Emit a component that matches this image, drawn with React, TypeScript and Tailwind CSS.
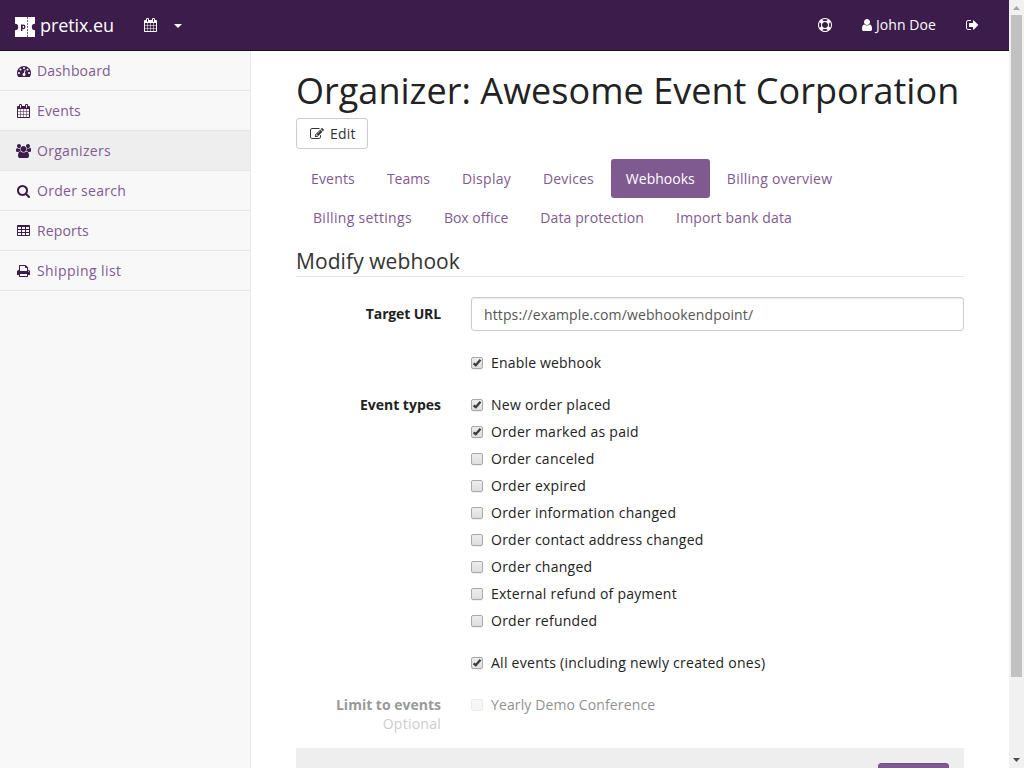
import React from "react";

type IconName =
  | "dashboard" | "calendar" | "users" | "search" | "table" | "print"
  | "user" | "signout" | "edit" | "ring";

const glyphs: Record<IconName, { x: number; w: number; d: string }> = {
  dashboard: { x: 0, w: 14, d: "M384 1152q0-53-37.5-90.5t-90.5-37.5-90.5 37.5-37.5 90.5 37.5 90.5 90.5 37.5 90.5-37.5 37.5-90.5zm192-448q0-53-37.5-90.5t-90.5-37.5-90.5 37.5-37.5 90.5 37.5 90.5 90.5 37.5 90.5-37.5 37.5-90.5zm428 481l101-382q6-26-7.5-48.5t-38.5-29.5-48 6.5-30 39.5l-101 382q-60 5-107 43.5t-63 98.5q-20 77 20 146t117 89 146-20 89-117q16-60-6-117t-72-91zm660-33q0-53-37.5-90.5t-90.5-37.5-90.5 37.5-37.5 90.5 37.5 90.5 90.5 37.5 90.5-37.5 37.5-90.5zm-640-640q0-53-37.5-90.5t-90.5-37.5-90.5 37.5-37.5 90.5 37.5 90.5 90.5 37.5 90.5-37.5 37.5-90.5zm448 192q0-53-37.5-90.5t-90.5-37.5-90.5 37.5-37.5 90.5 37.5 90.5 90.5 37.5 90.5-37.5 37.5-90.5zm320 448q0 261-141 483-19 29-54 29h-1402q-35 0-54-29-141-221-141-483 0-182 71-348t191-286 286-191 348-71 348 71 286 191 191 286 71 348z" },
  calendar: { x: 64, w: 13, d: "M192 1664h288v-288h-288v288zm352 0h320v-288h-320v288zm-352-352h288v-320h-288v320zm352 0h320v-320h-320v320zm-352-384h288v-288h-288v288zm736 736h320v-288h-320v288zm-384-736h320v-288h-320v288zm768 736h288v-288h-288v288zm-384-352h320v-320h-320v320zm-352-864v-288q0-13-9.5-22.5t-22.5-9.5h-64q-13 0-22.5 9.5t-9.5 22.5v288q0 13 9.5 22.5t22.5 9.5h64q13 0 22.5-9.5t9.5-22.5zm736 864h288v-320h-288v320zm-384-384h320v-288h-320v288zm384 0h288v-288h-288v288zm32-480v-288q0-13-9.5-22.5t-22.5-9.5h-64q-13 0-22.5 9.5t-9.5 22.5v288q0 13 9.5 22.5t22.5 9.5h64q13 0 22.5-9.5t9.5-22.5zm384-64v1280q0 52-38 90t-90 38h-1408q-52 0-90-38t-38-90v-1280q0-52 38-90t90-38h128v-96q0-66 47-113t113-47h64q66 0 113 47t47 113v96h384v-96q0-66 47-113t113-47h64q66 0 113 47t47 113v96h128q52 0 90 38t38 90z" },
  users: { x: 64, w: 15, d: "M657 896q-162 5-265 128h-134q-82 0-138-40.5t-56-118.5q0-353 124-353 6 0 43.5 21t97.5 42.5 119 21.5q67 0 133-23-5 37-5 66 0 159 93 286zm1071 637q0 120-73 189.5t-194 69.5h-874q-121 0-194-69.5t-73-189.5q0-53 3.5-103.5t14-109 26.5-108.5 43-97.5 62-81 85.5-53.5 111.5-20q10 0 43 21.5t73 48 107 48 135 21.5 135-21.5 107-48 73-48 43-21.5q61 0 111.5 20t85.5 53.5 62 81 43 97.5 26.5 108.5 14 109 3.5 103.5zm-1024-1277q0 106-75 181t-181 75-181-75-75-181 75-181 181-75 181 75 75 181zm704 384q0 159-112.5 271.5t-271.5 112.5-271.5-112.5-112.5-271.5 112.5-271.5 271.5-112.5 271.5 112.5 112.5 271.5zm576 225q0 78-56 118.5t-138 40.5h-134q-103-123-265-128 93-127 93-286 0-29-5-66 66 23 133 23 59 0 119-21.5t97.5-42.5 43.5-21q124 0 124 353zm-128-609q0 106-75 181t-181 75-181-75-75-181 75-181 181-75 181 75 75 181z" },
  search: { x: 64, w: 13, d: "M1216 832q0-185-131.5-316.5t-316.5-131.5-316.5 131.5-131.5 316.5 131.5 316.5 316.5 131.5 316.5-131.5 131.5-316.5zm512 832q0 52-38 90t-90 38q-54 0-90-38l-343-342q-179 124-399 124-143 0-273.5-55.5t-225-150-150-225-55.5-273.5 55.5-273.5 150-225 225-150 273.5-55.5 273.5 55.5 225 150 150 225 55.5 273.5q0 220-124 399l343 343q37 37 37 90z" },
  table: { x: 0, w: 13, d: "M128 128h1408q53 0 90.500 37.500t37.500 90.500v1152q0 53-37.500 90.500t-90.500 37.500h-1408q-53 0-90.500-37.500t-37.500-90.500v-1152q0-53 37.500-90.500t90.500-37.500zM128 384v256h384v-256zM640 384v256h384v-256zM1152 384v256h384v-256zM128 768v256h384v-256zM640 768v256h384v-256zM1152 768v256h384v-256zM128 1152v256h384v-256zM640 1152v256h384v-256zM1152 1152v256h384v-256z" },
  print: { x: 64, w: 13, d: "M448 1536h896v-256h-896v256zm0-640h896v-384h-160q-40 0-68-28t-28-68v-160h-640v640zm1152 64q0-26-19-45t-45-19-45 19-19 45 19 45 45 19 45-19 19-45zm128 0v416q0 13-9.5 22.5t-22.5 9.5h-224v160q0 40-28 68t-68 28h-960q-40 0-68-28t-28-68v-160h-224q-13 0-22.5-9.5t-9.5-22.5v-416q0-79 56.5-135.5t135.5-56.5h64v-544q0-40 28-68t68-28h672q40 0 88 20t76 48l152 152q28 28 48 76t20 88v256h64q79 0 135.5 56.5t56.5 135.5z" },
  user: { x: 256, w: 10, d: "M1536 1399q0 109-62.5 187t-150.5 78h-854q-88 0-150.5-78t-62.5-187q0-85 8.5-160.5t31.5-152 58.5-131 94-89 134.5-34.5q131 128 313 128t313-128q76 0 134.5 34.5t94 89 58.5 131 31.5 152 8.5 160.5zm-256-887q0 159-112.5 271.5t-271.5 112.5-271.5-112.5-112.5-271.5 112.5-271.5 271.5-112.5 271.5 112.5 112.5 271.5z" },
  signout: { x: 64, w: 13, d: "M704 1440q0 4 1 20t.5 26.5-3 23.5-10 19.5-20.5 6.5h-320q-119 0-203.5-84.5t-84.5-203.5v-704q0-119 84.5-203.5t203.5-84.5h320q13 0 22.5 9.5t9.5 22.5q0 4 1 20t.5 26.5-3 23.5-10 19.5-20.5 6.5h-320q-66 0-113 47t-47 113v704q0 66 47 113t113 47h312l11.5 1 11.5 3 8 5.5 7 9 2 13.5zm928-544q0 26-19 45l-544 544q-19 19-45 19t-45-19-19-45v-288h-448q-26 0-45-19t-19-45v-384q0-26 19-45t45-19h448v-288q0-26 19-45t45-19 45 19l544 544q19 19 19 45z" },
  edit: { x: 0, w: 14, d: "M888 1184l116-116-152-152-116 116v56h96v96h56zm440-720q-16-16-33 1l-350 350q-17 17-1 33t33-1l350-350q17-17 1-33zm80 594v190q0 119-84.5 203.5t-203.5 84.5h-832q-119 0-203.5-84.5t-84.5-203.5v-832q0-119 84.5-203.5t203.5-84.5h832q63 0 117 25 15 7 18 23 3 17-9 29l-49 49q-14 14-32 8-23-6-45-6h-832q-66 0-113 47t-47 113v832q0 66 47 113t113 47h832q66 0 113-47t47-113v-126q0-13 9-22l64-64q15-15 35-7t20 29zm-96-738l288 288-672 672h-288v-288zm444 132l-92 92-288-288 92-92q28-28 68-28t68 28l152 152q28 28 28 68t-28 68z" },
  ring: { x: 0, w: 14, d: "M896 0q182 0 348 71t286 191 191 286 71 348-71 348-191 286-286 191-348 71-348-71-286-191-191-286-71-348 71-348 191-286 286-191 348-71zm0 128q-190 0-361 90l194 194q82-28 167-28t167 28l194-194q-171-90-361-90zm-678 1129l194-194q-28-82-28-167t28-167l-194-194q-90 171-90 361t90 361zm678 407q190 0 361-90l-194-194q-82 28-167 28t-167-28l-194 194q171 90 361 90zm0-384q159 0 271.5-112.5t112.5-271.5-112.5-271.5-271.5-112.5-271.5 112.5-112.5 271.5 112.5 271.5 271.5 112.5zm484-217l194 194q90-171 90-361t-90-361l-194 194q28 82 28 167t-28 167z" },
};

function Icon({ name, className = "" }: { name: IconName; className?: string }) {
  const g = glyphs[name];
  return (
    <svg
      width={g.w}
      height={14}
      viewBox={`${g.x} 0 ${g.w * 128} 1792`}
      fill="currentColor"
      fillRule={name === "table" ? "evenodd" : "nonzero"}
      className={`shrink-0 ${className}`}
    >
      <path d={g.d} />
    </svg>
  );
}

function Logo() {
  return (
    <svg width="20" height="20" viewBox="0 0 20 20" className="shrink-0">
      <path fill="#fff" d="M0 0h20v6.800a3.200 3.200 0 0 0 0 6.400V20H0v-6.800a3.200 3.200 0 0 0 0-6.400z" />
      <path stroke="#3b1c4a" strokeWidth="0.7" strokeDasharray="2 1" d="M12.5 0v20" />
      <path fill="none" stroke="#3b1c4a" strokeWidth="1.4" d="M6.700 14V7.600" />
      <ellipse cx="8.300" cy="9.900" rx="1.500" ry="1.800" fill="none" stroke="#3b1c4a" strokeWidth="1.300" />
    </svg>
  );
}

const sidebar: { icon: IconName; label: string; active?: boolean; pad: string; tracking: string }[] = [
  { icon: "dashboard", label: "Dashboard", pad: "pl-[2px]", tracking: "tracking-[0.17px]" },
  { icon: "calendar", label: "Events", pad: "pl-[2px]", tracking: "tracking-[0.17px]" },
  { icon: "users", label: "Organizers", active: true, pad: "pl-[1px]", tracking: "tracking-[0.3px]" },
  { icon: "search", label: "Order search", pad: "pl-[2px]", tracking: "tracking-[0.28px]" },
  { icon: "table", label: "Reports", pad: "pl-[2px]", tracking: "tracking-[0.15px]" },
  { icon: "print", label: "Shipping list", pad: "pl-[2px]", tracking: "tracking-[0.42px]" },
];

const tabs: [string, string][][] = [
  [
    ["Events", "tracking-[0.17px]"],
    ["Teams", "tracking-normal"],
    ["Display", "tracking-[0.27px]"],
    ["Devices", "tracking-[0.14px]"],
    ["Webhooks", "tracking-[0.02px]"],
    ["Billing overview", "tracking-[0.27px]"],
  ],
  [
    ["Billing settings", "tracking-[0.31px]"],
    ["Box office", "tracking-normal"],
    ["Data protection", "tracking-[0.11px]"],
    ["Import bank data", "tracking-[0.17px]"],
  ],
];

const eventTypes: [string, boolean][] = [
  ["New order placed", true],
  ["Order marked as paid", true],
  ["Order canceled", false],
  ["Order expired", false],
  ["Order information changed", false],
  ["Order contact address changed", false],
  ["Order changed", false],
  ["External refund of payment", false],
  ["Order refunded", false],
];

function Check({ label, checked = false, disabled = false, tracking = "tracking-[0.25px]" }: { label: string; checked?: boolean; disabled?: boolean; tracking?: string }) {
  return (
    <div className={`flex h-5 items-center ${disabled ? "opacity-50" : ""}`}>
      <span
        role="checkbox"
        aria-checked={checked}
        aria-label={label}
        className={`flex size-3 shrink-0 items-center justify-center rounded-[2px] border bg-linear-to-b from-[#ededed] to-[#dedede] ${disabled ? "border-[#c0c0c0] opacity-60" : "border-[#a9a9a9] shadow-[0_1px_0_#0000000f]"}`}
      >
        {checked && (
          <svg width="10" height="10" viewBox="0 0 10 10" className="shrink-0">
            <path d="M1.600 5.300l2.200 1.900L8.500 1.800" fill="none" stroke="#3c3c3c" strokeWidth="2.300" />
          </svg>
        )}
      </span>
      <span className={`ml-2 whitespace-nowrap ${tracking}`}>{label}</span>
    </div>
  );
}

export default function App() {
  return (
    <div className="flex h-[768px] w-[1024px] overflow-hidden bg-white font-['Open_Sans',sans-serif] text-sm leading-5 text-[#222222]">
      <div className="flex w-[1009px] flex-col">
        <header className="flex h-[51px] shrink-0 items-start border-b border-[#1c0d23] bg-[#3b1c4a] text-white">
          <div className="flex h-[50px] items-center pt-[3px] pl-[15px]">
            <Logo />
            <span className="ml-[5px] w-[104px] pb-[3px] text-lg tracking-[-0.1px] whitespace-nowrap">pretix.eu</span>
          </div>
          <div className="flex h-[50px] items-center">
            <Icon name="calendar" />
            <span className="mt-[1px] ml-[17px] border-x-4 border-t-4 border-x-transparent border-t-white" />
          </div>
          <div className="ml-auto flex h-[50px] items-center">
            <Icon name="ring" className="mr-[30px]" />
            <Icon name="user" className="mr-[4px]" />
            <span className="w-[90px] tracking-[0.06px] whitespace-nowrap">John Doe</span>
            <Icon name="signout" className="mr-[30px]" />
          </div>
        </header>
        <div className="flex min-h-0 flex-1">
          <nav className="w-[251px] shrink-0 border-r border-[#e7e7e7] bg-[#f8f8f8]">
            {sidebar.map((s) => (
              <a key={s.label} className={`flex h-10 items-center border-b border-[#e7e7e7] pl-[15px] text-[#7f5a91] ${s.tracking} ${s.active ? "bg-[#eeeeee]" : ""}`}>
                <span className={`flex w-[22px] text-[#3b1c4a] ${s.pad}`}>
                  <Icon name={s.icon} />
                </span>
                {s.label}
              </a>
            ))}
          </nav>
          <main className="ml-[45px] flex h-[717px] w-[668px] shrink-0 flex-col overflow-hidden">
            <h1 className="mt-5 h-[47px] shrink-0 text-4xl leading-10 tracking-[0.03px] whitespace-nowrap">Organizer: Awesome Event Corporation</h1>
            <button className="flex h-[31px] w-[72px] shrink-0 items-center rounded-[3px] border border-[#cccccc] pl-[13px] tracking-[0.2px] text-[#333333]">
              <Icon name="edit" className="mr-[6px]" />
              Edit
            </button>
            <div className="mt-[10px] flex shrink-0 flex-col">
              {tabs.map((row, i) => (
                <div key={i} className={`flex gap-[2px] ${i ? "pl-[2px]" : ""}`}>
                  {row.map(([t, tracking]) => (
                    <a key={t} className={`h-[39px] rounded-[3px] px-[15px] py-[9.5px] whitespace-nowrap ${tracking} ${t === "Webhooks" ? "bg-[#7f5a91] text-white" : "text-[#7f5a91]"}`}>{t}</a>
                  ))}
                </div>
              ))}
            </div>
            <h2 className="mt-2 mb-5 h-[32px] shrink-0 border-b border-[#e5e5e5] text-[21px] leading-[33px] tracking-[0.08px] text-[#333333]">Modify webhook</h2>
            <div className="flex shrink-0">
              <div className="w-[145px] pt-[7px] text-right font-bold tracking-[-0.14px]">Target URL</div>
              <div className="ml-[30px] flex h-[34px] w-[493px] items-center rounded-[3px] border border-[#cccccc] px-3 pt-[2px] tracking-[0.12px] text-[#555555] shadow-[inset_0_1px_1px_#00000013]">https://example.com/webhookendpoint/</div>
            </div>
            <div className="mt-[22px] ml-[175px]"><Check label="Enable webhook" checked tracking="tracking-[0.18px]" /></div>
            <div className="mt-[22px] flex shrink-0">
              <div className="w-[145px] text-right font-bold">Event types</div>
              <div className="ml-[30px] flex flex-col gap-[7px]">
                {eventTypes.map(([label, on]) => <Check key={label} label={label} checked={on} />)}
              </div>
            </div>
            <div className="mt-[22px] ml-[175px]"><Check label="All events (including newly created ones)" checked tracking="tracking-[0.265px]" /></div>
            <div className="mt-[22px] flex shrink-0">
              <div className="w-[145px] text-right leading-[19px] text-[#999999]">
                <div className="font-bold">Limit to events</div>
                <div className="tracking-[0.25px] text-[#cccccc]">Optional</div>
              </div>
              <div className="ml-[30px]"><Check label="Yearly Demo Conference" disabled tracking="tracking-[0.12px]" /></div>
            </div>
            <div className="mt-[15px] flex h-[60px] shrink-0 justify-end bg-[#eeeeee] p-[15px]">
              <div className="h-[34px] w-[71px] rounded-[3px] border border-[#724f83] bg-[#7f5a91]" />
            </div>
          </main>
        </div>
      </div>
      <div className="flex w-[15px] shrink-0 flex-col items-center bg-[#f1f1f1]">
        <svg width="15" height="15" viewBox="0 0 15 15" className="shrink-0"><path d="M4 10h7L7.500 6z" fill="#a3a3a3" /></svg>
        <div className="h-[662px] w-[11px] shrink-0 bg-[#c1c1c1]" />
        <svg width="15" height="15" viewBox="0 0 15 15" className="mt-auto shrink-0"><path d="M4 5h7L7.500 9z" fill="#505050" /></svg>
      </div>
    </div>
  );
}
